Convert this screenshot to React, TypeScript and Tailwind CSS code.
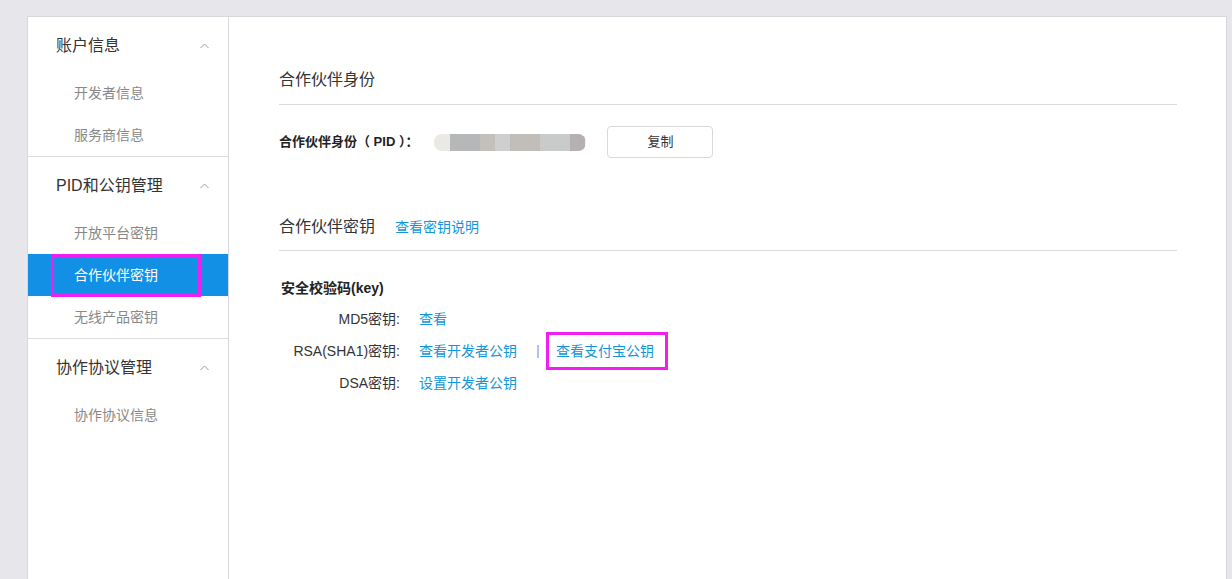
import React from "react";

const FONT = { fontFamily: '"Liberation Sans", "Noto Sans CJK SC", sans-serif' };

function Caret() {
  return (
    <svg width="9" height="6" viewBox="0 0 9 6" className="shrink-0">
      <polyline points="0.5,5 4.5,1 8.5,5" fill="none" stroke="#9a9a9a" strokeWidth="1" />
    </svg>
  );
}

type Item = { label: string; active?: boolean };

function Group({ title, items, last }: { title: string; items: Item[]; last?: boolean }) {
  return (
    <div className={last ? "" : "border-b border-[#dddde2]"}>
      <div className="h-[55px] pt-[3px] flex items-center justify-between pl-[28px] pr-[19px]">
        <span className="text-[16px] leading-6 text-[#333]">{title}</span>
        <Caret />
      </div>
      {items.map((it) =>
        it.active ? (
          <div key={it.label} className="h-[42px] bg-[#1190e6] pl-[23px] flex items-center">
            <span className="h-[43px] w-[150px] border-[3px] border-[#f21df0] pl-[20px] flex items-center text-[14px] text-white">
              {it.label}
            </span>
          </div>
        ) : (
          <div key={it.label} className="h-[42px] pl-[46px] flex items-center text-[14px] text-[#888]">
            {it.label}
          </div>
        )
      )}
    </div>
  );
}

function Blur() {
  const segs = [
    ["#ebe9e5", 16],
    ["#b6b7b9", 30],
    ["#c3c0bb", 15],
    ["#cfcfcf", 15],
    ["#c1beba", 30],
    ["#c9cbca", 30],
    ["#b5b1b0", 15],
  ] as const;
  return (
    <div className="flex h-[17px] rounded-[8px] overflow-hidden bg-[#f4f2f1] pr-[1px]">
      {segs.map(([c, w], i) => (
        <div key={i} style={{ background: c, width: w }} />
      ))}
    </div>
  );
}

export default function App() {
  return (
    <div className="h-[579px] overflow-hidden bg-[#e7e6eb] pt-[16px] pl-[27px] pr-[5px]" style={FONT}>
      <div className="h-full bg-white border-l border-t border-r border-[#d8d7dd] flex">
        <aside className="w-[201px] shrink-0 border-r border-[#d8d7dd]">
          <Group title="账户信息" items={[{ label: "开发者信息" }, { label: "服务商信息" }]} />
          <Group
            title="PID和公钥管理"
            items={[{ label: "开放平台密钥" }, { label: "合作伙伴密钥", active: true }, { label: "无线产品密钥" }]}
          />
          <Group title="协作协议管理" items={[{ label: "协作协议信息" }]} last />
        </aside>
        <main className="flex-1 pl-[50px] pr-[49px] pt-[51px] text-[#333]">
          <div className="text-[16px] leading-6 pb-3 border-b border-[#dcdcdc]">合作伙伴身份</div>
          <div className="mt-[21px] h-[32px] flex items-center">
            <span className="text-[13px] font-bold text-[#222] whitespace-pre">合作伙伴身份（ PID ）：</span>
            <div className="ml-[16px]">
              <Blur />
            </div>
            <button className="ml-[21px] w-[106px] h-[32px] border border-[#d9d9d9] rounded-[4px] bg-white text-[13px] text-[#333]">
              复制
            </button>
          </div>

          <div className="mt-[57px] leading-6 pb-[11px] border-b border-[#dcdcdc] flex items-center">
            <span className="text-[16px]">合作伙伴密钥</span>
            <span className="ml-[20px] text-[14px] text-[#1296db]">查看密钥说明</span>
          </div>

          <div className="mt-[26px] ml-[2px] text-[14px] leading-[22px] font-bold text-[#222]">安全校验码(key)</div>

          <div className="mt-[4px] text-[14px]">
            <div className="h-8 flex items-center">
              <span className="w-[121px] text-right text-[#333]">MD5密钥:</span>
              <span className="ml-[19px] text-[#1296db]">查看</span>
            </div>
            <div className="h-8 flex items-center">
              <span className="w-[121px] text-right text-[#333]">RSA(SHA1)密钥:</span>
              <span className="ml-[19px] text-[#1296db]">查看开发者公钥</span>
              <span className="ml-[20px] w-[2px] h-[13px] bg-[#a9c6ef]" />
              <span className="ml-[7px] h-[38px] border-[3px] border-[#f21df0] pl-[7px] pr-[11px] flex items-center text-[#1296db]">
                查看支付宝公钥
              </span>
            </div>
            <div className="h-8 flex items-center">
              <span className="w-[121px] text-right text-[#333]">DSA密钥:</span>
              <span className="ml-[19px] text-[#1296db]">设置开发者公钥</span>
            </div>
          </div>
        </main>
      </div>
    </div>
  );
}
